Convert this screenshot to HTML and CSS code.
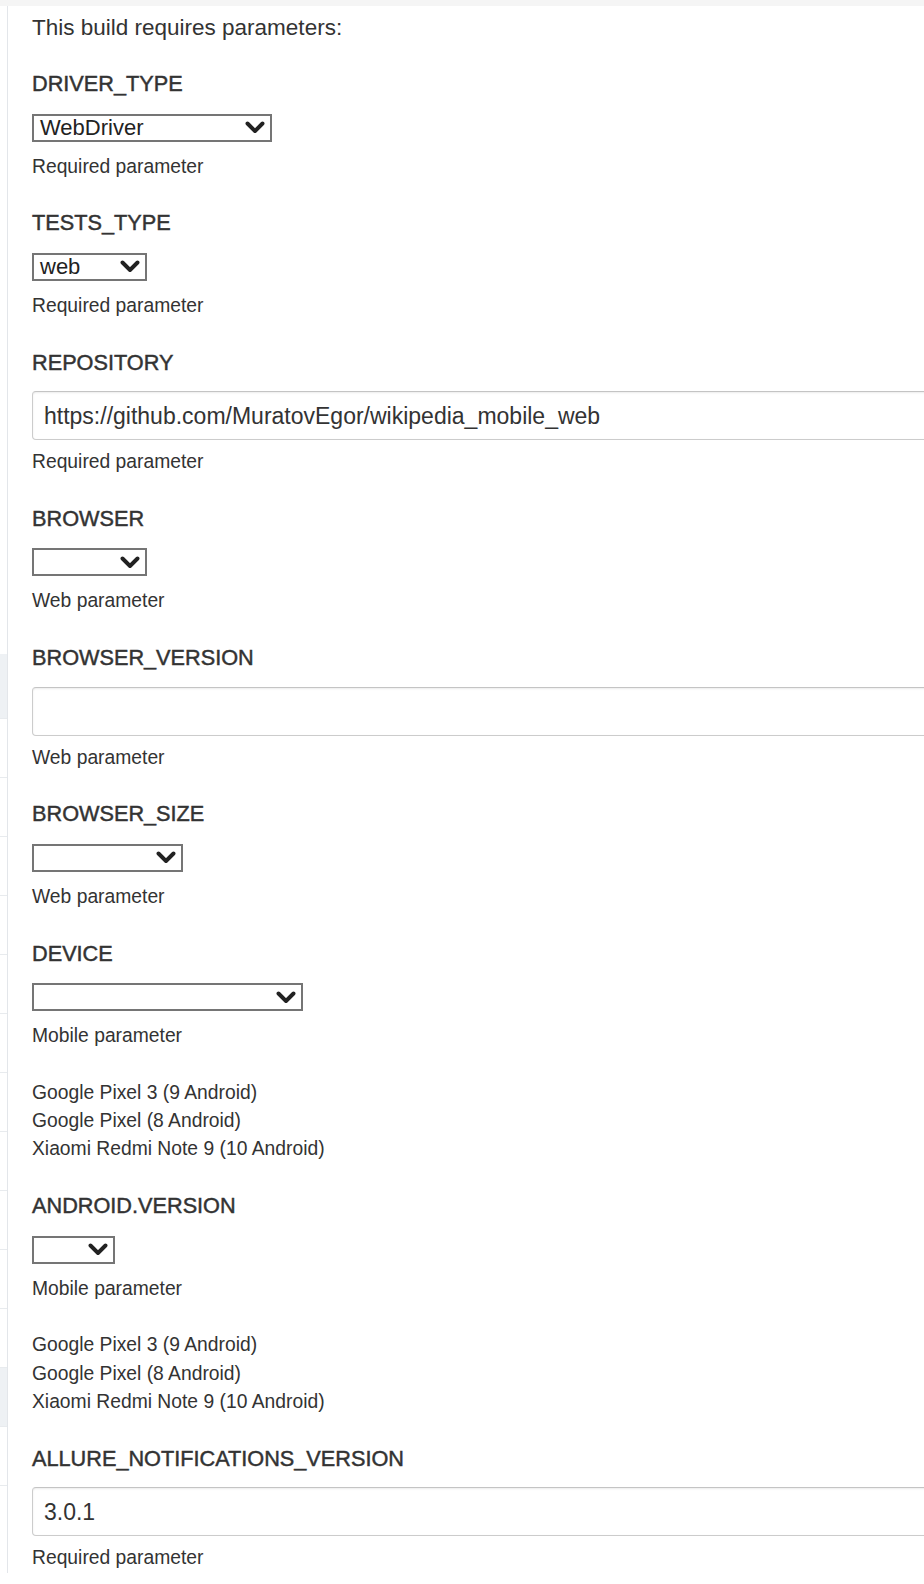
FILE: index.html
```html
<!DOCTYPE html>
<html lang="en">
<head>
<meta charset="utf-8">
<title>Build with parameters</title>
<link rel="stylesheet" href="styles.css">
</head>
<body>
<div class="topbar"></div>
<div class="layout">
  <aside class="side">
    <div class="side-row side-tall"></div>
    <div class="side-row side-shade side-first"></div>
    <div class="side-row"></div>
    <div class="side-row"></div>
    <div class="side-row"></div>
    <div class="side-row"></div>
    <div class="side-row"></div>
    <div class="side-row"></div>
    <div class="side-row"></div>
    <div class="side-row"></div>
    <div class="side-row"></div>
    <div class="side-row"></div>
    <div class="side-row"></div>
    <div class="side-row side-shade"></div>
    <div class="side-row"></div>
  </aside>
  <main class="content">
    <p class="intro">This build requires parameters:</p>

    <div class="param">
      <div class="name">DRIVER_TYPE</div>
      <div class="select sel-driver"><span class="sel-text">WebDriver</span><svg class="chev" viewBox="0 0 20 13"><path d="M2.5 2.5 L10 10 L17.5 2.5"/></svg></div>
      <div class="desc">Required parameter</div>
    </div>

    <div class="param">
      <div class="name">TESTS_TYPE</div>
      <div class="select sel-small"><span class="sel-text">web</span><svg class="chev" viewBox="0 0 20 13"><path d="M2.5 2.5 L10 10 L17.5 2.5"/></svg></div>
      <div class="desc">Required parameter</div>
    </div>

    <div class="param">
      <div class="name">REPOSITORY</div>
      <div class="input"><span class="input-text">https://github.com/MuratovEgor/wikipedia_mobile_web</span></div>
      <div class="desc">Required parameter</div>
    </div>

    <div class="param">
      <div class="name">BROWSER</div>
      <div class="select sel-small"><span class="sel-text"></span><svg class="chev" viewBox="0 0 20 13"><path d="M2.5 2.5 L10 10 L17.5 2.5"/></svg></div>
      <div class="desc">Web parameter</div>
    </div>

    <div class="param">
      <div class="name">BROWSER_VERSION</div>
      <div class="input"><span class="input-text"></span></div>
      <div class="desc">Web parameter</div>
    </div>

    <div class="param">
      <div class="name">BROWSER_SIZE</div>
      <div class="select sel-size"><span class="sel-text"></span><svg class="chev" viewBox="0 0 20 13"><path d="M2.5 2.5 L10 10 L17.5 2.5"/></svg></div>
      <div class="desc">Web parameter</div>
    </div>

    <div class="param">
      <div class="name">DEVICE</div>
      <div class="select sel-device"><span class="sel-text"></span><svg class="chev" viewBox="0 0 20 13"><path d="M2.5 2.5 L10 10 L17.5 2.5"/></svg></div>
      <div class="desc">Mobile parameter<br><br>Google Pixel 3 (9 Android)<br>Google Pixel (8 Android)<br>Xiaomi Redmi Note 9 (10 Android)</div>
    </div>

    <div class="param">
      <div class="name">ANDROID.VERSION</div>
      <div class="select sel-android"><span class="sel-text"></span><svg class="chev" viewBox="0 0 20 13"><path d="M2.5 2.5 L10 10 L17.5 2.5"/></svg></div>
      <div class="desc">Mobile parameter<br><br>Google Pixel 3 (9 Android)<br>Google Pixel (8 Android)<br>Xiaomi Redmi Note 9 (10 Android)</div>
    </div>

    <div class="param">
      <div class="name">ALLURE_NOTIFICATIONS_VERSION</div>
      <div class="input"><span class="input-text">3.0.1</span></div>
      <div class="desc">Required parameter</div>
    </div>
  </main>
</div>
</body>
</html>
```

FILE: styles.css
```css
html, body {
  margin: 0;
  padding: 0;
  background: #ffffff;
}
body {
  font-family: "Liberation Sans", Arial, Helvetica, sans-serif;
  color: #333333;
  overflow: hidden;
  width: 924px;
  height: 1584px;
}
.topbar {
  height: 6px;
  background: #f5f5f5;
}
.layout {
  display: grid;
  grid-template-columns: 8px 1fr;
}
.side {
  border-right: 1px solid #e3e6ea;
  display: flex;
  flex-direction: column;
}
.side-row {
  height: 58px;
  flex: none;
  border-bottom: 1px solid #e8ebee;
}
.side-tall {
  height: 648px;
  border-bottom: none;
}
.side-first {
  height: 64px;
}
.side-shade {
  background: #eef1f4;
}
.content {
  padding: 7px 0 0 24px;
  overflow: hidden;
}
.intro {
  margin: 0;
  font-size: 22.5px;
  line-height: 30px;
}
.param {
  margin-top: 26px;
}
.param + .param {
  margin-top: 27.5px;
}
.name {
  font-size: 21.7px;
  line-height: 30px;
  font-weight: normal;
  -webkit-text-stroke: 0.45px #333333;
}
.select {
  box-sizing: border-box;
  height: 28px;
  margin-top: 14.5px;
  margin-bottom: 11px;
  border: 2px solid #757575;
  display: flex;
  align-items: center;
  justify-content: space-between;
  padding: 0 5px 0 6px;
  background: #fff;
}
.sel-text {
  font-size: 22px;
  line-height: 24px;
  color: #222;
}
.chev {
  width: 20px;
  height: 13px;
  flex: none;
}
.chev path {
  fill: none;
  stroke: #222;
  stroke-width: 3.9;
  stroke-linecap: round;
  stroke-linejoin: round;
}
.sel-driver { width: 240px; }
.sel-small { width: 115px; }
.sel-size { width: 151px; }
.sel-device { width: 271px; }
.sel-android { width: 83px; }
.input {
  box-sizing: border-box;
  width: 1000px;
  height: 49px;
  margin-top: 13.5px;
  margin-bottom: 8px;
  border: 1px solid #cccccc;
  border-top-color: #c4c4c4;
  border-radius: 4px;
  box-shadow: inset 0 1px 2px rgba(0,0,0,0.08);
  display: flex;
  align-items: center;
  padding: 0 11px;
  background: #fff;
}
.input-text {
  font-size: 23px;
  line-height: 28px;
  color: #333;
}
.desc {
  font-size: 19.3px;
  line-height: 28.3px;
}
```
